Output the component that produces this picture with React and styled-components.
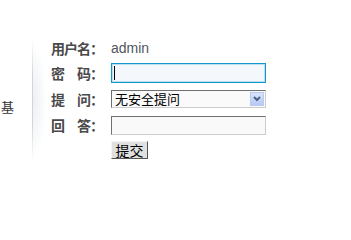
import React from "react";
import styled, { createGlobalStyle } from "styled-components";

const GlobalStyle = createGlobalStyle`
  html, body {
    margin: 0;
    padding: 0;
    background: #fff;
  }
  body {
    font-family: "Liberation Sans", "Noto Sans CJK SC", sans-serif;
  }
`;

const Page = styled.div`
  display: flex;
  align-items: flex-start;
  width: 351px;
  height: 202px;
  padding-top: 40px;
  box-sizing: border-box;
  overflow: hidden;
`;

const Side = styled.div`
  width: 31px;
  padding-top: 60px;
  padding-left: 1px;
  font-family: "Noto Sans CJK SC", sans-serif;
  font-size: 13px;
  line-height: 14px;
  color: #333;
`;

const Divider = styled.div`
  width: 14px;
  height: 120px;
  border-left: 1px solid transparent;
  border-image: linear-gradient(
      to bottom,
      rgba(210, 210, 210, 0),
      #d4d4d4 30%,
      #d4d4d4 70%,
      rgba(210, 210, 210, 0)
    )
    1;
  background: radial-gradient(
    ellipse at left center,
    rgba(220, 226, 235, 0.55),
    rgba(255, 255, 255, 0) 70%
  );
`;

const Form = styled.form`
  display: grid;
  grid-template-columns: 60px 155px;
  grid-template-rows: 17px 20px 20px 20px 18px;
  row-gap: 6px;
  align-items: center;
  margin-left: 4px;
`;

const Label = styled.span`
  font-family: "Noto Sans CJK SC", sans-serif;
  font-weight: 700;
  font-size: 14px;
  letter-spacing: -1px;
  line-height: 17px;
  color: #4a4a4a;
  white-space: pre;
`;

const Value = styled.span`
  font-family: "Liberation Sans", Arial, sans-serif;
  font-size: 14px;
  line-height: 17px;
  color: #4f5660;
`;

const Field = styled.div`
  position: relative;
  display: flex;
  align-items: center;
`;

const TextInput = styled.input`
  box-sizing: border-box;
  width: 155px;
  height: ${({ $h }) => $h || 19}px;
  margin: 0;
  padding: 0 3px;
  font-size: 13px;
  outline: none;
  background: ${({ $active }) => ($active ? "#f4f7fc" : "#f9f9f9")};
  border: 1px solid;
  border-color: ${({ $active }) =>
    $active ? "#1197c9" : "#707070 #cccccc #cccccc #707070"};
  ${({ $active }) => $active && "box-shadow: inset 0 0 0 1px rgba(17,151,201,0.25);"}
`;

const Caret = styled.span`
  position: absolute;
  left: 3px;
  top: 3px;
  width: 1px;
  height: 14px;
  background: #000;
`;

const Select = styled.select`
  box-sizing: border-box;
  appearance: none;
  width: 155px;
  height: 18px;
  margin: 0;
  padding: 0 0 0 3px;
  font-family: "Noto Sans CJK SC", sans-serif;
  font-size: 13px;
  line-height: 16px;
  color: #000;
  background: #fafafa;
  border: 1px solid;
  border-color: #707070 #cccccc #cccccc #707070;
  outline: none;
`;

const ArrowButton = styled.span`
  position: absolute;
  right: 2px;
  top: 2px;
  width: 14px;
  height: 14px;
  box-sizing: border-box;
  display: flex;
  align-items: center;
  justify-content: center;
  border: 1px solid #b9c9ef;
  background: linear-gradient(to bottom, #d9e4fb, #b6c9f3);
  pointer-events: none;
`;

const Submit = styled.button`
  grid-column: 2;
  justify-self: start;
  box-sizing: border-box;
  width: 37px;
  height: 18px;
  margin: 0;
  padding: 0;
  font-family: "Noto Sans CJK SC", sans-serif;
  font-size: 14px;
  line-height: 14px;
  color: #000;
  background: #e0e0e0;
  border: 1px solid;
  border-color: #f4f4f4 #555 #555 #f4f4f4;
`;

export default function App() {
  return (
    <>
      <GlobalStyle />
      <Page>
        <Side>基</Side>
        <Divider />
        <Form onSubmit={(e) => e.preventDefault()}>
          <Label>用户名：</Label>
          <Value>admin</Value>

          <Label>密　码：</Label>
          <Field>
            <TextInput type="password" $active $h={20} />
            <Caret />
          </Field>

          <Label>提　问：</Label>
          <Field>
            <Select defaultValue="0">
              <option value="0">无安全提问</option>
            </Select>
            <ArrowButton>
              <svg width="8" height="6" viewBox="0 0 8 6">
                <path d="M1 1 L4 4 L7 1" fill="none" stroke="#4d6185" strokeWidth="2" />
              </svg>
            </ArrowButton>
          </Field>

          <Label>回　答：</Label>
          <Field>
            <TextInput type="text" />
          </Field>

          <Submit type="submit">提交</Submit>
        </Form>
      </Page>
    </>
  );
}
